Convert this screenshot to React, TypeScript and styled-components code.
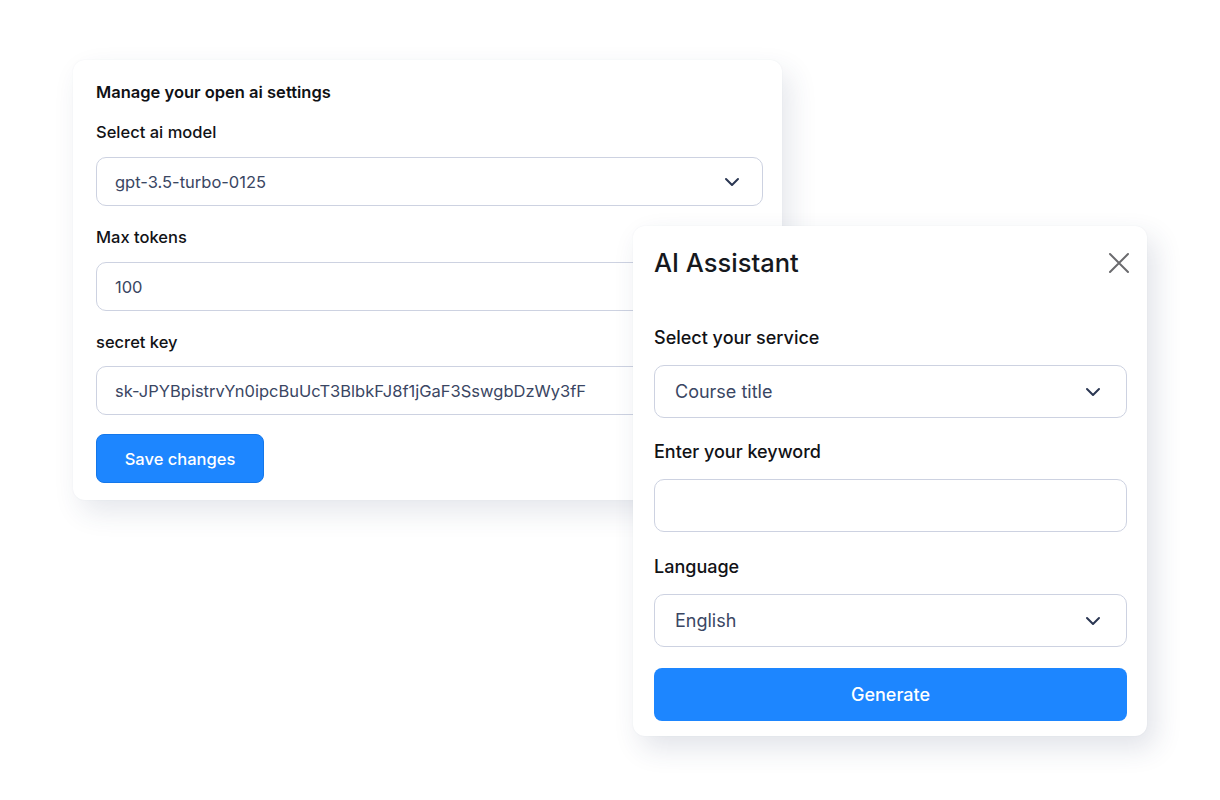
import React from "react";
import styled, { createGlobalStyle } from "styled-components";

const Global = createGlobalStyle`
  html, body { margin: 0; padding: 0; background: #ffffff; }
  body { font-family: Inter, "Noto Sans", "Liberation Sans", sans-serif; color: #111827; }
  * { box-sizing: border-box; }
`;

const Stage = styled.div`
  position: relative;
  width: 1220px;
  height: 800px;
  padding: 60px 0 0 73px;
  background: #ffffff;
`;

const SettingsCard = styled.section`
  width: 709px;
  height: 440px;
  background: #ffffff;
  border-radius: 12px;
  padding: 20px 19px 17px 23px;
  box-shadow: 8px 12px 28px rgba(40, 60, 100, 0.12), 0 0 2px rgba(40, 60, 100, 0.06);
  display: flex;
  flex-direction: column;
`;

const AssistantCard = styled.section`
  position: absolute;
  left: 633px;
  top: 226px;
  width: 514px;
  height: 510px;
  background: #ffffff;
  border-radius: 12px;
  padding: 21px 20px 15px 21px;
  box-shadow: 8px 12px 28px rgba(40, 60, 100, 0.14), 0 0 2px rgba(40, 60, 100, 0.06);
  display: flex;
  flex-direction: column;
`;

const SettingsTitle = styled.h2`
  margin: 0 0 16px;
  font-size: 16.5px;
  line-height: 24px;
  font-weight: 600;
  color: #0f1115;
`;

const Label = styled.label<{ $size?: number; $gap?: number; $top?: number }>`
  display: block;
  font-size: ${(p) => p.$size ?? 16.5}px;
  line-height: 24px;
  font-weight: 500;
  color: #111216;
  margin-top: ${(p) => p.$top ?? 0}px;
  margin-bottom: ${(p) => p.$gap ?? 13}px;
`;

const Field = styled.div<{ $h: number; $size?: number; $pad?: number; $right?: number }>`
  height: ${(p) => p.$h}px;
  border: 1px solid #cdd2e1;
  border-radius: 10px;
  background: #fff;
  display: flex;
  align-items: center;
  justify-content: space-between;
  padding: 0 ${(p) => p.$right ?? 22}px 0 ${(p) => p.$pad ?? 18}px;
  font-size: ${(p) => p.$size ?? 16.5}px;
  color: #3a4663;
  white-space: nowrap;
  overflow: hidden;
`;

const Chevron = styled.svg`
  flex: none;
  width: 16px;
  height: 10px;
`;

const SaveButton = styled.button`
  margin-top: 19px;
  width: 168px;
  height: 49px;
  border: 1px solid #1477ea;
  border-radius: 8px;
  background: #1d86ff;
  color: #ffffff;
  font-family: inherit;
  font-size: 16.5px;
  font-weight: 500;
  cursor: pointer;
`;

const Header = styled.div`
  display: flex;
  align-items: center;
  justify-content: space-between;
  height: 32px;
  margin-bottom: 47px;
`;

const AssistantTitle = styled.h1`
  margin: 0;
  font-size: 25.5px;
  line-height: 32px;
  font-weight: 500;
  color: #16181d;
`;

const CloseIcon = styled.svg`
  width: 22px;
  height: 22px;
  margin-right: -3px;
`;

const GenerateButton = styled.button`
  margin-top: 21px;
  width: 100%;
  height: 53px;
  border: none;
  border-radius: 8px;
  background: #1d86ff;
  color: #ffffff;
  font-family: inherit;
  font-size: 18px;
  font-weight: 500;
  cursor: pointer;
`;

const Arrow = () => (
  <Chevron viewBox="0 0 16 10">
    <path d="M2 2 L8 8 L14 2" fill="none" stroke="#2b3753" strokeWidth="2" strokeLinecap="round" strokeLinejoin="round" />
  </Chevron>
);

export default function App() {
  return (
    <>
      <Global />
      <Stage>
        <SettingsCard>
          <SettingsTitle>Manage your open ai settings</SettingsTitle>
          <Label>Select ai model</Label>
          <Field $h={49}>
            <span>gpt-3.5-turbo-0125</span>
            <Arrow />
          </Field>
          <Label $top={19}>Max tokens</Label>
          <Field $h={49}>
            <span>100</span>
          </Field>
          <Label $top={19} $gap={12}>secret key</Label>
          <Field $h={49}>
            <span>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</span>
          </Field>
          <SaveButton>Save changes</SaveButton>
        </SettingsCard>

        <AssistantCard>
          <Header>
            <AssistantTitle>AI Assistant</AssistantTitle>
            <CloseIcon viewBox="0 0 22 22">
              <path d="M2 2 L20 20 M20 2 L2 20" stroke="#6b6b6e" strokeWidth="2" strokeLinecap="round" />
            </CloseIcon>
          </Header>
          <Label $size={18} $gap={15}>Select your service</Label>
          <Field $h={53} $size={18} $pad={20} $right={25}>
            <span>Course title</span>
            <Arrow />
          </Field>
          <Label $size={18} $gap={15} $top={22}>Enter your keyword</Label>
          <Field $h={53} $size={18} $pad={20} $right={25} />
          <Label $size={18} $gap={15} $top={23}>Language</Label>
          <Field $h={53} $size={18} $pad={20} $right={25}>
            <span>English</span>
            <Arrow />
          </Field>
          <GenerateButton>Generate</GenerateButton>
        </AssistantCard>
      </Stage>
    </>
  );
}
